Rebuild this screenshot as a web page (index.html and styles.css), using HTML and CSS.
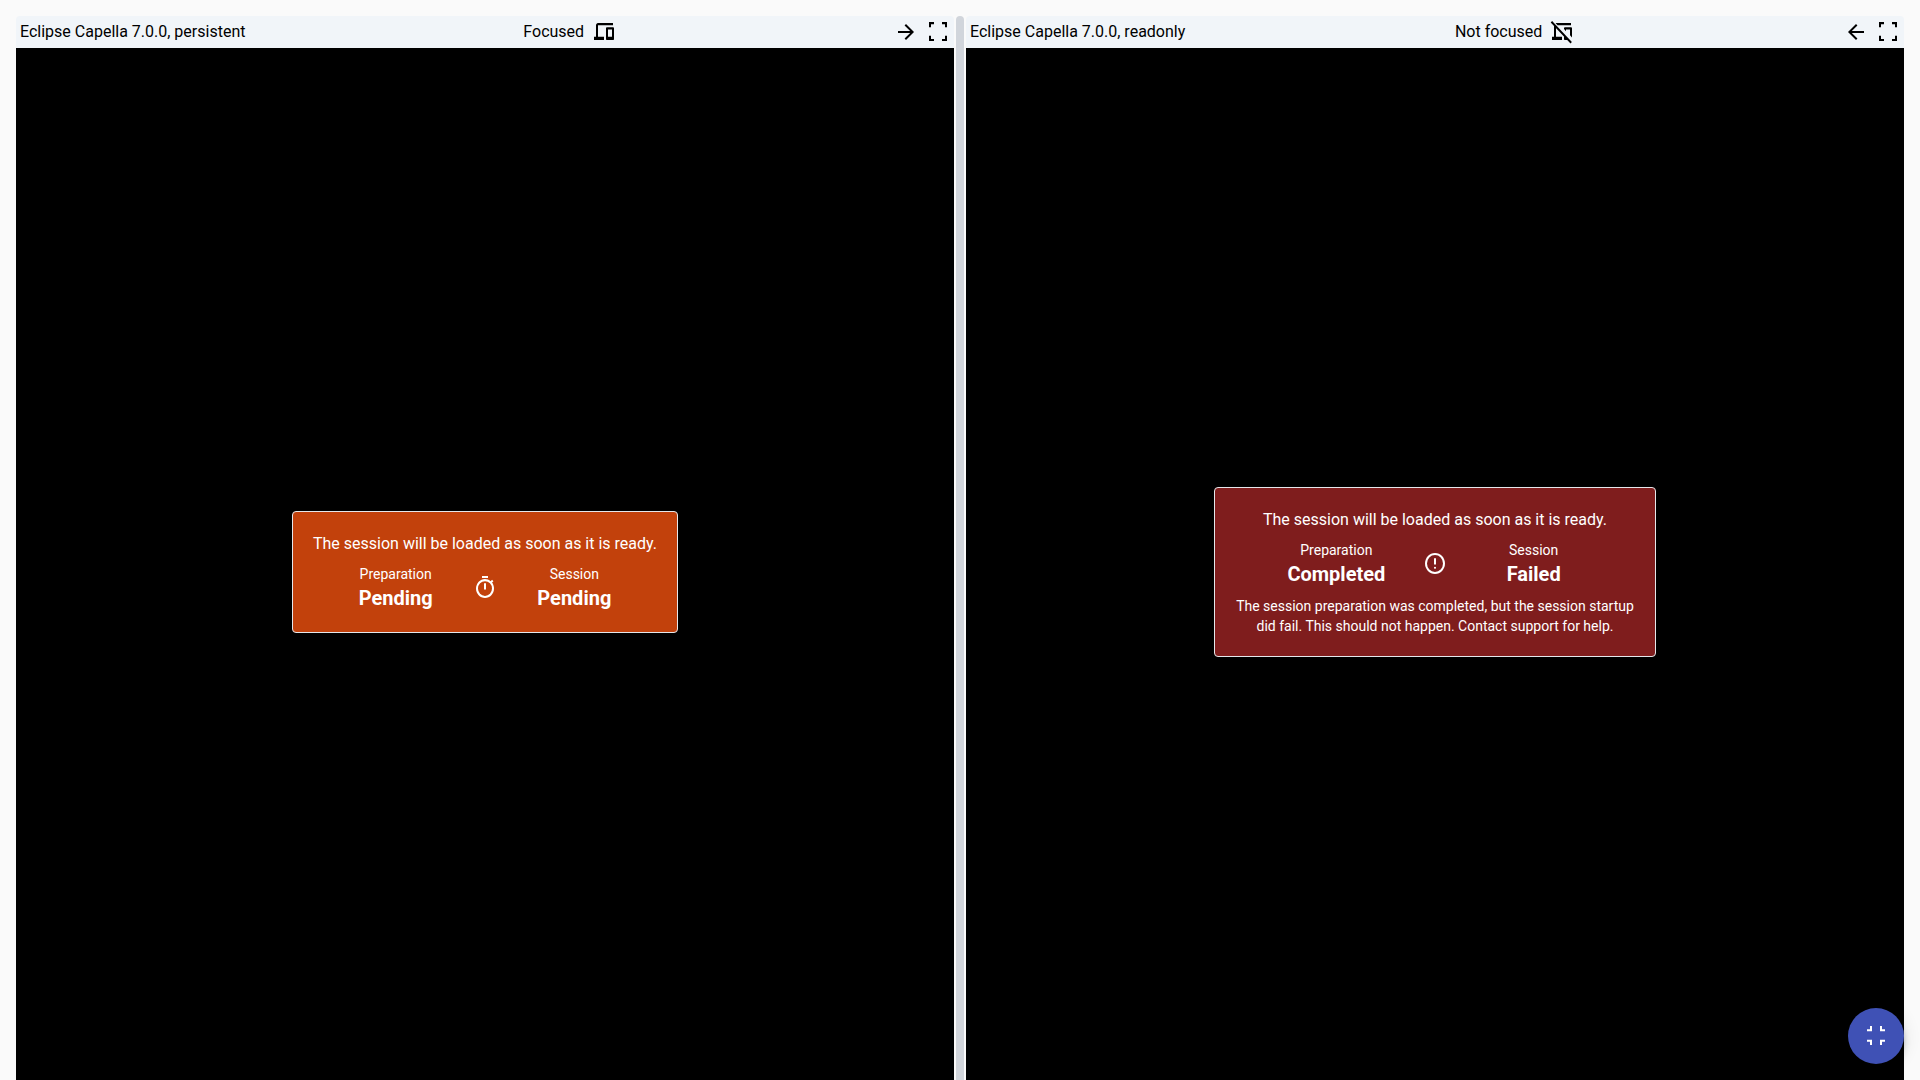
FILE: index.html
```html
<!DOCTYPE html>
<html lang="en">
<head>
<meta charset="utf-8">
<meta name="viewport" content="width=device-width, initial-scale=1">
<title>Sessions</title>
<link rel="stylesheet" href="styles.css">
</head>
<body>
<main class="viewer">
  <section class="session">
    <header class="session-bar">
      <span>Eclipse Capella 7.0.0, persistent</span>
      <div class="bar-group">
        <span>Focused</span>
        <svg class="icon" viewBox="0 -917 960 911" preserveAspectRatio="none" aria-hidden="true"><path d="M80-160v-120h80v-440q0-33 23.500-56.500T240-800h600v80H240v440h240v120H80Zm520 0q-17 0-28.500-11.500T560-200v-400q0-17 11.500-28.500T600-640h240q17 0 28.500 11.500T880-600v400q0 17-11.500 28.500T840-160H600Zm40-120h160v-280H640v280Z"/></svg>
      </div>
      <div class="bar-group">
        <button class="icon-button" type="button" aria-label="Move right"><svg class="icon" viewBox="0 -960 960 960"><path d="M647-440H160v-80h487L423-744l57-56 320 320-320 320-57-56 224-224Z"/></svg></button>
        <button class="icon-button" type="button" aria-label="Fullscreen"><svg class="icon" viewBox="0 -917 960 911" preserveAspectRatio="none"><path d="M120-120v-200h80v120h120v80H120Zm520 0v-80h120v-120h80v200H640ZM120-640v-200h200v80H200v120h-80Zm640 0v-120H640v-80h200v200h-80Z"/></svg></button>
      </div>
    </header>
    <div class="screen">
      <div class="card card-pending">
        <p class="card-title">The session will be loaded as soon as it is ready.</p>
        <div class="states">
          <div class="state"><span class="state-label">Preparation</span><strong class="state-value">Pending</strong></div>
          <svg class="icon" viewBox="0 -917 960 911" preserveAspectRatio="none" aria-hidden="true"><path d="M360-840v-80h240v80H360Zm80 440h80v-240h-80v240Zm40 320q-74 0-139.500-28.500T226-186q-49-49-77.500-114.500T120-440q0-74 28.500-139.500T226-694q49-49 114.500-77.500T480-800q62 0 119 20t107 58l56-56 56 56-56 56q38 50 58 107t20 119q0 74-28.500 139.500T734-186q-49 49-114.500 77.500T480-80Zm0-80q116 0 198-82t82-198q0-116-82-198t-198-82q-116 0-198 82t-82 198q0 116 82 198t198 82Z"/></svg>
          <div class="state"><span class="state-label">Session</span><strong class="state-value">Pending</strong></div>
        </div>
      </div>
    </div>
  </section>
  <div class="divider" role="separator" aria-orientation="vertical"></div>
  <section class="session">
    <header class="session-bar">
      <span>Eclipse Capella 7.0.0, readonly</span>
      <div class="bar-group">
        <span>Not focused</span>
        <svg class="icon" viewBox="0 -917 960 911" preserveAspectRatio="none" aria-hidden="true"><path d="M80-160v-120h80v-514l80 80v434h240v120H80ZM302-720l-80-80h618v80H302Zm578 466-80-80v-226H640v66l-80-80v-26q0-17 11.500-28.500T600-640h240q17 0 28.500 11.500T880-600v346ZM560-348l188 188H600q-17 0-28.500-11.500T560-200v-148ZM820-28 28-820l56-56L876-84l-56 56Z"/></svg>
      </div>
      <div class="bar-group">
        <button class="icon-button" type="button" aria-label="Move left"><svg class="icon" viewBox="0 -960 960 960"><path d="m313-440 224 224-57 56-320-320 320-320 57 56-224 224h487v80H313Z"/></svg></button>
        <button class="icon-button" type="button" aria-label="Fullscreen"><svg class="icon" viewBox="0 -917 960 911" preserveAspectRatio="none"><path d="M120-120v-200h80v120h120v80H120Zm520 0v-80h120v-120h80v200H640ZM120-640v-200h200v80H200v120h-80Zm640 0v-120H640v-80h200v200h-80Z"/></svg></button>
      </div>
    </header>
    <div class="screen">
      <div class="card card-failed">
        <p class="card-title">The session will be loaded as soon as it is ready.</p>
        <div class="states">
          <div class="state"><span class="state-label">Preparation</span><strong class="state-value">Completed</strong></div>
          <svg class="icon" viewBox="0 -917 960 911" preserveAspectRatio="none" aria-hidden="true"><path d="M480-280q17 0 28.500-11.500T520-320q0-17-11.500-28.500T480-360q-17 0-28.500 11.500T440-320q0 17 11.500 28.500T480-280Zm-40-160h80v-240h-80v240Zm40 360q-83 0-156-31.500T197-197q-54-54-85.500-127T80-480q0-83 31.500-156T197-763q54-54 127-85.500T480-880q83 0 156 31.500T763-763q54 54 85.500 127T880-480q0 83-31.500 156T763-197q-54 54-127 85.500T480-80Zm0-80q134 0 227-93t93-227q0-134-93-227t-227-93q-134 0-227 93t-93 227q0 134 93 227t227 93Z"/></svg>
          <div class="state"><span class="state-label">Session</span><strong class="state-value">Failed</strong></div>
        </div>
        <p class="card-message">The session preparation was completed, but the session startup did fail. This should not happen. Contact support for help.</p>
      </div>
    </div>
  </section>
</main>
<button class="fab" type="button" aria-label="Exit fullscreen"><svg class="icon" viewBox="0 -917 960 911" preserveAspectRatio="none"><path d="M240-120v-120H120v-80h200v200h-80Zm400 0v-200h200v80H720v120h-80ZM120-640v-80h120v-120h80v200H120Zm520 0v-200h80v120h120v80H640Z"/></svg></button>
</body>
</html>
```
FILE: styles.css
```css
* {
  box-sizing: border-box;
}

body {
  margin: 0;
  height: 100vh;
  overflow: hidden;
  background: #fafafa;
  color: #000;
  font: 16px/24px Roboto, sans-serif;
}

p {
  margin: 0;
}

button {
  border: 0;
  padding: 0;
  background: none;
  color: inherit;
  cursor: pointer;
}

.icon {
  display: block;
  flex: none;
  width: 24px;
  height: 24px;
  overflow: visible;
  fill: currentColor;
}

.viewer {
  display: flex;
  gap: 2px;
  padding: 16px 16px 0;
}

.session {
  display: flex;
  flex: 1;
  flex-direction: column;
  min-width: 0;
  height: 100vh;
}

.session-bar {
  display: flex;
  align-items: center;
  justify-content: space-between;
  padding: 4px;
  border-radius: 4px 4px 0 0;
  background: #f1f5f9;
}

.bar-group {
  display: flex;
  align-items: center;
  gap: 8px;
}

.screen {
  display: flex;
  flex: 1;
  align-items: center;
  justify-content: center;
  background: #000;
}

.divider {
  width: 8px;
  border-radius: 4px;
  background: #d1d5db;
  cursor: col-resize;
}

.card {
  display: flex;
  flex-direction: column;
  gap: 8px;
  max-width: 442px;
  padding: 20px;
  border: 1px solid #e5e7eb;
  border-radius: 4px;
  color: #fff;
  text-align: center;
}

.card-pending {
  background: #c2410c;
}

.card-failed {
  background: #7f1d1d;
}

.states {
  display: flex;
  align-items: center;
  justify-content: center;
  gap: 20px;
}

.state {
  display: flex;
  flex-direction: column;
  width: calc(100% / 3);
}

.state-label,
.card-message {
  font-size: 14px;
  line-height: 20px;
}

.state-value {
  font-size: 20px;
  line-height: 28px;
}

.fab {
  position: fixed;
  right: 16px;
  bottom: 16px;
  display: flex;
  align-items: center;
  justify-content: center;
  width: 56px;
  height: 56px;
  border-radius: 50%;
  background: #3f51b5;
  color: #fff;
  box-shadow: 0 3px 5px -1px rgba(0, 0, 0, 0.2), 0 6px 10px rgba(0, 0, 0, 0.14), 0 1px 18px rgba(0, 0, 0, 0.12);
}
```
